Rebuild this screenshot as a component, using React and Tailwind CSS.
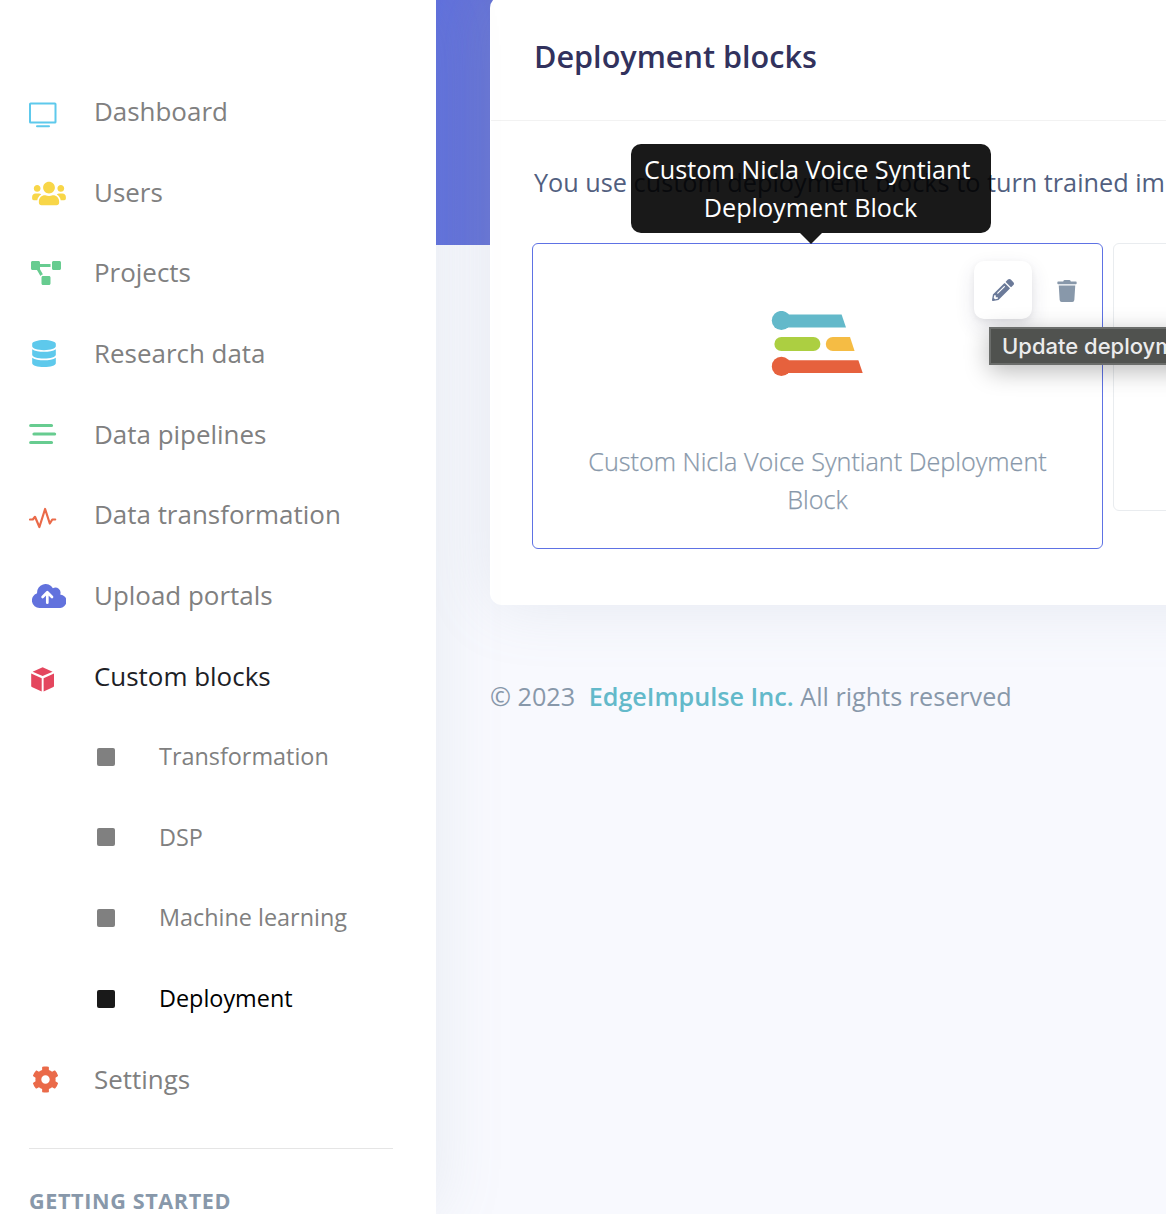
import React from "react";
import { FaUsers, FaProjectDiagram, FaDatabase, FaCog, FaTrash, FaPencilAlt } from "react-icons/fa";

const Monitor = () => (
  <svg width="28" height="28" viewBox="0 0 28 28" fill="none" stroke="currentColor" strokeWidth="2">
    <rect x="1" y="2.5" width="25.5" height="19" rx="0.6" />
    <path d="M8 25.2h12" strokeLinecap="round" />
  </svg>
);
const Lines = () => (
  <svg width="28" height="28" viewBox="0 0 28 28" stroke="currentColor" strokeWidth="3.2" strokeLinecap="round">
    <path d="M1.7 5.5H22.5M5 14H25.6M1.7 22.5H22.5" />
  </svg>
);
const Wave = () => (
  <svg width="28" height="28" viewBox="0 0 28 28" fill="none" stroke="currentColor" strokeWidth="2.2" strokeLinecap="round" strokeLinejoin="round">
    <path d="M1 14.5H3.8L6 11.8L10.4 22L16.1 4L20.8 18.5L23.3 14.5H26.2" />
  </svg>
);
const Box = () => (
  <svg width="28" height="28" viewBox="0 0 28 28" fill="currentColor">
    <path d="M13.6 1.2L23.6 5.7L13.6 10L3.6 5.7Z" />
    <path d="M2.2 7.6L12.7 12.2V25.6L2.8 21.1Q2.2 20.8 2.2 20.1Z" />
    <path d="M25 7.6L14.6 12.2V25.6L24.4 21.1Q25 20.8 25 20.1Z" />
  </svg>
);
const CloudUp = () => (
  <svg width="34" height="24" viewBox="0 0 34 24">
    <path fill="currentColor" d="M7.6 24A7.6 7.6 0 0 1 5.1 9.2A8.5 8.5 0 0 1 20.9 4.2A5.1 5.1 0 0 1 28.2 10.4A6.8 6.8 0 0 1 27.2 24Z" />
    <path d="M15.3 18.7V9M10.6 13L15.3 8.3L20 13" fill="none" stroke="white" strokeWidth="2.7" strokeLinecap="round" strokeLinejoin="round" />
  </svg>
);

const items = [
  { label: "Dashboard", color: "text-[#5ec9ec]", icon: <Monitor />, pad: "pl-[29px] pt-[7px]" },
  { label: "Users", color: "text-[#f8d648]", icon: <FaUsers className="h-[27px] w-[34px]" />, pad: "pl-8 pt-0.5" },
  { label: "Projects", color: "text-[#67cc90]", icon: <FaProjectDiagram className="h-6 w-[30px]" />, pad: "pl-[31px]" },
  { label: "Research data", color: "text-[#5ec9ec]", icon: <FaDatabase className="h-[27px] w-6" />, pad: "pl-8 pt-px" },
  { label: "Data pipelines", color: "text-[#67cc90]", icon: <Lines />, pad: "pl-[29px]" },
  { label: "Data transformation", color: "text-[#ea6a49]", icon: <Wave />, pad: "pl-[29px] pt-2" },
  { label: "Upload portals", color: "text-[#6272dd]", icon: <CloudUp />, pad: "pl-8 pt-px" },
  { label: "Custom blocks", color: "text-[#e4465e]", icon: <Box />, pad: "pl-[29px] pt-2", active: true },
  { label: "Transformation", sub: true },
  { label: "DSP", sub: true },
  { label: "Machine learning", sub: true },
  { label: "Deployment", sub: true, active: true },
  { label: "Settings", color: "text-[#ea6a49]", icon: <FaCog className="h-[27px] w-[27px]" />, pad: "pl-8" },
];

function NavItem({ label, color, icon, pad, sub, active }) {
  if (sub) {
    return (
      <li className={`flex h-[80.67px] items-center pl-[97px] text-[23.4px] ${active ? "text-black" : "text-[#808080]"}`}>
        <span className={`size-[18px] shrink-0 rounded-[2px] ${active ? "bg-[#191919]" : "bg-[#808080]"}`} />
        <span className="ml-11 whitespace-nowrap">{label}</span>
      </li>
    );
  }
  return (
    <li className="flex h-[80.67px] items-center">
      <span className={`flex w-[94px] shrink-0 ${color} ${pad}`}>{icon}</span>
      <span className={`whitespace-nowrap text-[25.95px] ${active ? "text-[#1d2126]" : "text-[#808080]"}`}>{label}</span>
    </li>
  );
}

function Logo() {
  return (
    <svg className="ml-[238px] block" width="92" height="66" viewBox="0 0 92 66">
      <g fill="#63b9ca"><circle cx="10.4" cy="9.5" r="9.6" /><path d="M12 3.5H70.6L75 16.5H12Z" /></g>
      <rect x="3.4" y="26" width="46" height="14" rx="7" fill="#accf41" />
      <path d="M61.8 26H79L83.6 40H61.8A7 7 0 0 1 61.8 26Z" fill="#f5bc44" />
      <g fill="#e6613d"><circle cx="10.4" cy="55.4" r="9.6" /><path d="M12 49.2H87.4L91.7 62.1H12Z" /></g>
    </svg>
  );
}

export default function App() {
  return (
    <div className="flex h-[1214px] w-[1166px] overflow-hidden bg-[#f8f9fe] font-['Open_Sans','Noto_Sans',sans-serif]">
      <aside className="z-10 w-[436px] shrink-0 overflow-hidden bg-white shadow-[0_0_64px_0_rgba(136,152,170,0.15)]">
        <ul className="pt-[71.15px]">
          {items.map((item) => <NavItem key={item.label} {...item} />)}
        </ul>
        <hr className="mr-[43px] ml-[29px] mt-[28.35px] border-t border-[#e5e5e5]" />
        <h6 className="ml-[29px] mt-9 whitespace-nowrap text-[21.6px] leading-[32px] font-bold tracking-[0.62px] text-[#8898aa]">GETTING STARTED</h6>
      </aside>

      <main className="w-[730px] shrink-0 bg-[linear-gradient(90deg,#6070de,#6774d6_60px)] bg-[length:100%_245px] bg-no-repeat pl-[54px]">
        <section className="-mt-1 h-[609px] w-[1000px] rounded-xl border border-transparent bg-white shadow-[0_0_64px_0_rgba(136,152,170,0.17)]">
          <header className="h-[124px] border-b border-black/5 pt-9 pl-[43px]">
            <h3 className="text-[30.6px] leading-[46px] font-semibold text-[#32325d]">Deployment blocks</h3>
          </header>
          <div className="pl-[41px] pt-[42px]">
            <p className="pl-0.5 text-[25.25px] leading-[38px] whitespace-nowrap text-[#525f7f]">You use custom deployment blocks to turn trained impulses</p>
            <div className="mt-[42px] flex items-start gap-2.5">
              <article className="relative h-[306px] w-[571px] shrink-0 rounded-md border border-[#5e72e4] pt-[67px]">
                <Logo />
                <p className="mx-auto mt-[65px] w-[500px] text-center text-[25.2px] leading-[38px] font-[350] text-[#8898aa] [-webkit-text-stroke:0.25px_#8898aa]">
                  Custom Nicla Voice Syntiant Deployment Block
                </p>
                <div className="absolute top-[17px] right-[6px] flex">
                  <button className="flex size-[58px] items-center justify-center rounded-[10px] bg-white text-[#6b7a99] shadow-[0_8px_20px_rgba(50,50,93,0.12),0_2px_6px_rgba(0,0,0,0.06)]">
                    <FaPencilAlt className="size-[22px]" />
                  </button>
                  <button className="ml-[6px] flex size-[58px] items-center justify-center pt-0.5 text-[#8898aa]">
                    <FaTrash className="size-[22px]" />
                  </button>
                </div>
                <div className="absolute -top-[100px] left-[97.5px] flex h-[89px] w-[360px] flex-col items-center justify-center rounded-[10px] bg-black/90 pb-0.5 text-center text-[25.2px] leading-[38px] text-white">
                  <p className="whitespace-nowrap">Custom Nicla Voice Syntiant&nbsp;<br />Deployment Block</p>
                  <span className="absolute top-full border-x-[11px] border-t-[11px] border-x-transparent border-t-black/90" />
                </div>
                <div className="absolute top-[83px] left-[456px] z-10 flex h-[38px] w-[300px] items-center border-2 border-[#6b6d6b] bg-[#50524f] pl-[11px] font-['Inter',sans-serif] text-[22px] font-[450] whitespace-nowrap text-[#ececec] shadow-[0_6px_24px_rgba(0,0,0,0.28)]">
                  Update deployment block
                </div>
              </article>
              <article className="h-[268px] w-[571px] shrink-0 rounded-md border border-[#e9ecef]" />
            </div>
          </div>
        </section>
        <footer className="mt-[72px] text-[25.2px] leading-[38px] whitespace-nowrap text-[#8898aa]">
          © 2023 <a className="ml-[7px] font-semibold text-[#63b9ca]">EdgeImpulse Inc.</a> All rights reserved
        </footer>
      </main>
    </div>
  );
}
